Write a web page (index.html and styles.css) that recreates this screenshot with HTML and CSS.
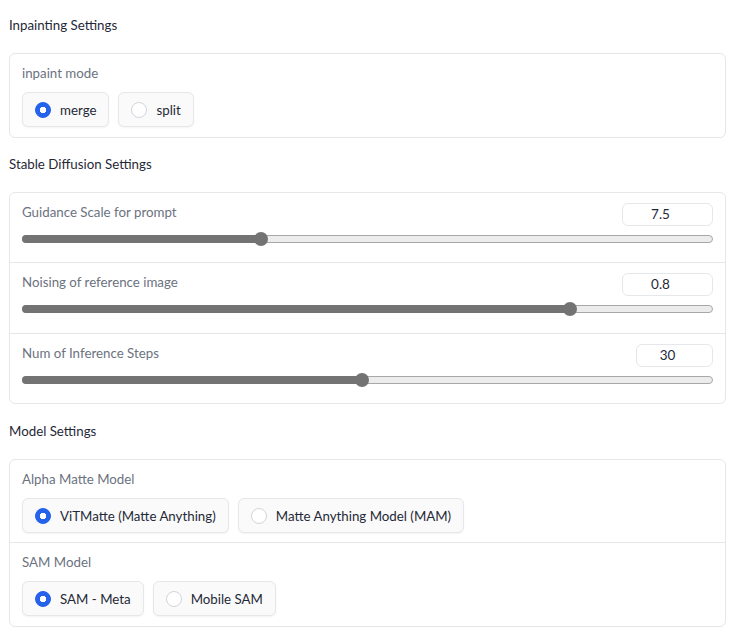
FILE: index.html
```html
<!DOCTYPE html>
<html>
<head>
<meta charset="utf-8">
<link rel="stylesheet" href="styles.css">
</head>
<body>
<div class="page">
  <div class="heading">Inpainting Settings</div>
  <div class="box">
    <div class="block">
      <div class="label">inpaint mode</div>
      <div class="radios">
        <label class="radio checked"><span class="dot"></span>merge</label>
        <label class="radio"><span class="dot"></span>split</label>
      </div>
    </div>
  </div>

  <div class="heading">Stable Diffusion Settings</div>
  <div class="box">
    <div class="srow">
      <div class="shead">
        <div class="label">Guidance Scale for prompt</div>
        <div class="num">7.5</div>
      </div>
      <div class="slider">
        <div class="track"></div>
        <div class="fill" style="width:34.6%"></div>
        <div class="thumb" style="left:34.6%"></div>
      </div>
    </div>
    <div class="srow mid">
      <div class="shead">
        <div class="label">Noising of reference image</div>
        <div class="num">0.8</div>
      </div>
      <div class="slider">
        <div class="track"></div>
        <div class="fill" style="width:79.3%"></div>
        <div class="thumb" style="left:79.3%"></div>
      </div>
    </div>
    <div class="srow">
      <div class="shead">
        <div class="label">Num of Inference Steps</div>
        <div class="num narrow">30</div>
      </div>
      <div class="slider">
        <div class="track"></div>
        <div class="fill" style="width:49.2%"></div>
        <div class="thumb" style="left:49.2%"></div>
      </div>
    </div>
  </div>

  <div class="heading spaced">Model Settings</div>
  <div class="box">
    <div class="block divided">
      <div class="label">Alpha Matte Model</div>
      <div class="radios">
        <label class="radio checked"><span class="dot"></span>ViTMatte (Matte Anything)</label>
        <label class="radio"><span class="dot"></span>Matte Anything Model (MAM)</label>
      </div>
    </div>
    <div class="block">
      <div class="label">SAM Model</div>
      <div class="radios">
        <label class="radio checked"><span class="dot"></span>SAM - Meta</label>
        <label class="radio"><span class="dot"></span>Mobile SAM</label>
      </div>
    </div>
  </div>
</div>
</body>
</html>
```
FILE: styles.css
```css
html, body {
  margin: 0;
  padding: 0;
  background: #ffffff;
}
body {
  font-family: Lato, "Open Sans", sans-serif;
  font-size: 13.3px;
  color: #1f2937;
}
.page {
  padding: 15px 8px 0 9px;
}
.heading {
  height: 20px;
  line-height: 20px;
  color: #1f2937;
  margin-bottom: 18px;
}
.heading.spaced {
  padding-top: 1px;
}
.box {
  border: 1px solid #e5e7eb;
  border-radius: 6px;
  margin-bottom: 16px;
  background: #fff;
}
.block {
  padding: 9px 12px 10px 12px;
}
.block.divided {
  border-bottom: 1px solid #e5e7eb;
  padding-bottom: 9px;
}
.label {
  color: #6b7280;
  line-height: 20px;
  height: 20px;
}
.radios {
  display: flex;
  gap: 9px;
  margin-top: 9px;
}
.radio {
  display: flex;
  align-items: center;
  height: 33px;
  padding: 0 12px;
  border: 1px solid #e5e7eb;
  border-radius: 6px;
  background: #fafafa;
  box-shadow: 0 1px 2px rgba(0,0,0,0.05);
  color: #1f2937;
}
.dot {
  width: 14px;
  height: 14px;
  border-radius: 50%;
  border: 1px solid #d1d5db;
  background: #fff;
  margin-right: 9px;
  box-sizing: content-box;
}
.radio.checked .dot {
  border-color: #2563eb;
  background: #2563eb;
  background-image: radial-gradient(circle, #fff 0 3px, #2563eb 3.5px);
}
.srow {
  padding: 9px 12px 15px 12px;
  border-bottom: 1px solid #e5e7eb;
}
.srow.mid {
  padding-bottom: 16px;
}
.srow:last-child {
  border-bottom: none;
}
.shead {
  display: flex;
  justify-content: space-between;
  align-items: flex-start;
  height: 24px;
}
.num {
  margin-top: 1px;
  width: 75px;
  padding-right: 14px;
  height: 21px;
  line-height: 21px;
  border: 1px solid #e5e7eb;
  border-radius: 6px;
  text-align: center;
  color: #1f2937;
  font-size: 13.5px;
}
.num.narrow {
  width: 61px;
}
.slider {
  position: relative;
  height: 16px;
  margin-top: 5px;
}
.track {
  position: absolute;
  left: 0;
  right: 0;
  top: 4px;
  height: 6px;
  border: 1px solid #a8a8a8;
  border-radius: 4px;
  background: #ececec;
}
.fill {
  position: absolute;
  left: 0;
  top: 4px;
  height: 8px;
  border-radius: 4px;
  background: #737373;
}
.thumb {
  position: absolute;
  top: 1px;
  width: 14px;
  height: 14px;
  margin-left: -7px;
  border-radius: 50%;
  background: #737373;
}
```
